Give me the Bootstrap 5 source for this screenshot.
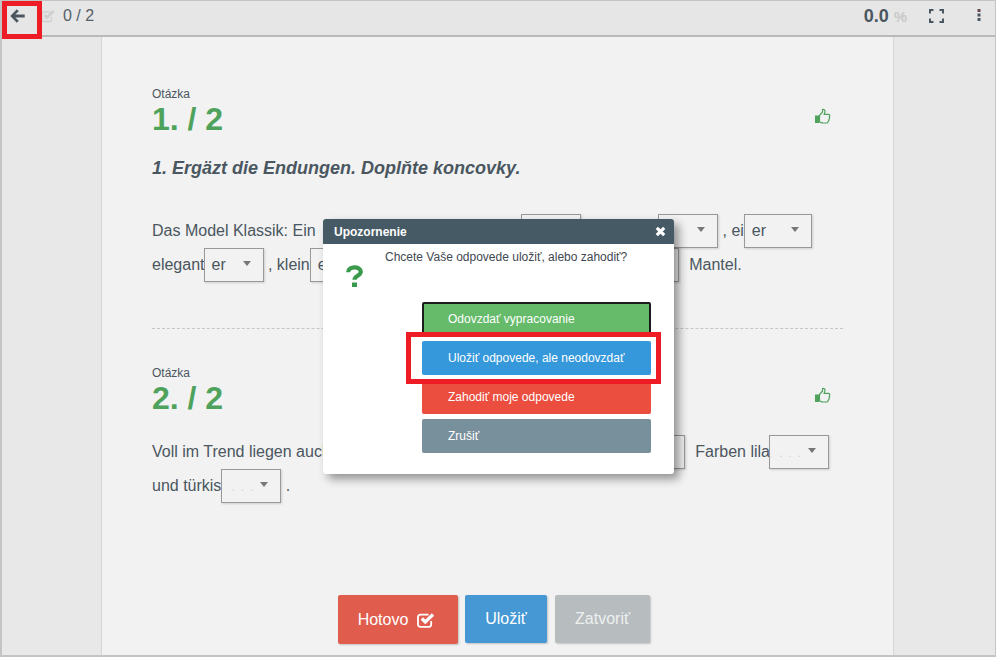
<!DOCTYPE html>
<html lang="sk">
<head>
<meta charset="utf-8">
<title>Otázky</title>
<link rel="stylesheet" href="https://cdn.jsdelivr.net/npm/bootstrap@5.3.0/dist/css/bootstrap.min.css">
<style>
html,body{height:100%;margin:0;overflow:hidden}
body{font-family:"Liberation Sans",Arial,sans-serif;background:#e8e8e8;color:#4a5660;font-size:16px}
.frame{height:657px;border:1px solid #c4c4c4;border-width:1px 1px 2px 2px;position:relative;overflow:hidden}
.topbar{height:36px;background:#e6e6e6;border-bottom:2px solid #b9b9b9;padding:0 0 5px 0}
.back-slot{width:39px;padding-left:8px}
.tick{margin-left:0}
.score-count{font-size:16px;margin-left:8px;color:#555f68}
.pct{font-size:18px;font-weight:700;color:#4a5660;padding-top:2px}
.pct span{color:#c8c8c8;font-size:15px}
.fs-slot{margin-left:22px}
.more-slot{margin-left:33px;margin-right:14px;margin-top:-2px}
.sheet{width:793px;height:620px;margin-left:99px;background:#f2f2f2;border:solid #d6d6d6;border-width:0 1px;padding:0 50px;}
.q-label{font-size:12px;line-height:14px;color:#4a5660}
.q-num{font-size:32px;font-weight:700;line-height:36px;color:#4ea25c}
.q-one{padding-top:50px}
.q-two{padding-top:37px;border-top:1px dashed #c6c6c6;margin-top:46px}
.thumb-slot{margin-top:21px;margin-right:12px}
.q-task{font-size:18px;font-weight:700;font-style:italic;margin-top:19px;line-height:24px}
.q-text{line-height:34px;margin-top:34px;white-space:nowrap}
.q-text-2{margin-top:19px}
.pick{display:inline-flex;align-items:center;justify-content:space-between;vertical-align:middle;width:60px;height:34px;border:1px solid #999;box-shadow:1px 1px 2px rgba(0,0,0,.15);padding:0 12px 0 7px;line-height:32px;color:#4a5660;margin-top:-2px}
.pick::after{content:"";border:4.5px solid transparent;border-top:5px solid #777;border-bottom:0;margin-top:-3px;margin-left:auto}
.pick-wide{width:68px}
.pick-nudge{margin-left:-1px}
.pick-empty{color:#d4d4d4;font-size:13px;letter-spacing:1px;padding-left:2px;padding-top:3px}
.after-pick{margin-left:6px}
.gap-a{display:inline-block;width:201px}
.gap-b{display:inline-block;width:77px}
.gap-c{display:inline-block;width:249px}
.gap-d{display:inline-block;width:294px}
.actions{position:absolute;left:336px;top:594px}
.act{height:48px;border:0;border-radius:2px;color:#fff;font-size:16px;box-shadow:1px 1px 2px rgba(0,0,0,.2);padding:0;display:flex;align-items:center;justify-content:center;gap:9px}
.act-done{width:120px;height:49px;background:#e05d4e;padding-right:3px}
.act-save{width:82px;margin-left:-1px;background:#4598d3}
.act-close{width:95px;background:#b7bcbf;color:#eef0f0}
.dialog{position:absolute;left:321px;top:218px;width:351px;height:255px;background:#fff;border-radius:3px;box-shadow:5px 5px 10px rgba(0,0,0,.4);overflow:hidden}
.dialog-head{height:25px;background:#465a65;color:#fff;font-size:12px;font-weight:700;padding:0 8px 0 11px}
.dialog-body{padding:0 23px 0 22px}
.ask{width:40px;margin-top:21px;margin-left:1px;margin-right:-1px}
.ask-text{font-size:12px;line-height:14px;margin-top:6px;color:#3f4750}
.stack{margin-left:77px;margin-top:15px;gap:5px}
.opt{height:34px;border:0;border-radius:2px;color:#fff;font-size:12px;text-align:left;padding:0 0 0 26px;width:229px;display:block;line-height:34px}
.opt-green{background:#65bb6a;border:2px solid #1c1c1c;padding-left:24px;line-height:30px}
.opt-blue{background:#3498db}
.opt-red{background:#eb4d3e}
.opt-grey{background:#78909c}
.mark-box{position:absolute;border:5px solid #ee1c25;pointer-events:none}
.mark-back{left:0;top:0;width:40px;height:38px}
.mark-opt{left:404px;top:331px;width:255px;height:52px}
</style>
</head>
<body>
<div class="frame">
  <header class="topbar d-flex align-items-center">
    <div class="back-slot d-flex">
      <svg width="15" height="14" viewBox="0 0 15 14"><path d="M6.800 0.300 8.800 2.300 5.300 5.400H14.700V8.600H5.300L8.800 11.700 6.800 13.700 0.300 7Z" fill="#4a5660"/></svg>
    </div>
    <svg class="tick" width="14" height="14" viewBox="0 0 14 14"><path d="M10.500 8v3a1.500 1.500 0 0 1-1.500 1.500H2.500A1.500 1.500 0 0 1 1 11V4.500A1.500 1.500 0 0 1 2.500 3H9" fill="none" stroke="#d0d0d0" stroke-width="1.400"/><path d="M3.500 6 6 8.500l6.500-6.500" fill="none" stroke="#cfcfcf" stroke-width="2.700"/></svg>
    <span class="score-count">0 / 2</span>
    <div class="ms-auto pct">0.0 <span>%</span></div>
    <div class="fs-slot d-flex">
      <svg width="15" height="14" viewBox="0 0 15 14"><path d="M1 4.500V1h3.500M10.500 1H14v3.500M14 9.500V13h-3.500M4.500 13H1V9.500" fill="none" stroke="#4a5660" stroke-width="2"/></svg>
    </div>
    <div class="more-slot d-flex">
      <svg width="4" height="14" viewBox="0 0 4 14"><rect x="0.500" y="1" width="3" height="3" fill="#6a4a50"/><rect x="0.500" y="5.500" width="3" height="3" fill="#4a5660"/><rect x="0.500" y="10" width="3" height="3" fill="#4a5660"/></svg>
    </div>
  </header>
  <main class="sheet">
    <section class="q-one">
      <div class="d-flex justify-content-between align-items-start">
        <div><div class="q-label">Otázka</div><div class="q-num">1. / 2</div></div>
        <svg class="thumb-slot" width="17" height="17" viewBox="0 0 17 17"><path d="M5.500 7.500 8.500 4V1.500c1.500-.5 2.500.5 2.500 2 0 1-.5 2-.8 2.800h4.300c1.500.2 1.500 2 .8 2.700.5 1 .3 1.800-.3 2.300.2 1-.2 1.700-.9 2.100.1 1.300-.8 1.600-2 1.600H9c-1.500 0-2.500-.8-3.500-1z" fill="none" stroke="#4ea25c" stroke-width="1.200"/><rect x="1" y="7.500" width="4" height="7.500" fill="#4ea25c"/></svg>
      </div>
      <div class="q-task">1. Ergäzt die Endungen. Doplňte koncovky.</div>
      <div class="q-text">
        <div>Das Model Klassik: Ein <span class="gap-a"></span><span class="pick"></span><span class="gap-b"></span><span class="pick"></span> , ei<span class="pick pick-wide">er</span></div>
        <div>elegant<span class="pick pick-nudge">er</span> , klein<span class="pick">er</span><span class="gap-c"></span><span class="pick"></span> <span class="after-pick">Mantel.</span></div>
      </div>
    </section>
    <section class="q-two">
      <div class="d-flex justify-content-between align-items-start">
        <div><div class="q-label">Otázka</div><div class="q-num">2. / 2</div></div>
        <svg class="thumb-slot" width="17" height="17" viewBox="0 0 17 17"><path d="M5.500 7.500 8.500 4V1.500c1.500-.5 2.500.5 2.500 2 0 1-.5 2-.8 2.800h4.300c1.500.2 1.500 2 .8 2.700.5 1 .3 1.800-.3 2.300.2 1-.2 1.700-.9 2.100.1 1.300-.8 1.600-2 1.600H9c-1.500 0-2.500-.8-3.500-1z" fill="none" stroke="#4ea25c" stroke-width="1.200"/><rect x="1" y="7.500" width="4" height="7.500" fill="#4ea25c"/></svg>
      </div>
      <div class="q-text q-text-2">
        <div>Voll im Trend liegen auch<span class="gap-d"></span><span class="pick"></span> <span class="after-pick">Farben lila</span><span class="pick pick-nudge"><span class="pick-empty">. . .</span></span></div>
        <div>und türkis<span class="pick"><span class="pick-empty">. . .</span></span> .</div>
      </div>
    </section>
  </main>
  <div class="actions d-flex gap-2 align-items-start">
    <button class="act act-done" type="button">Hotovo
      <svg width="18" height="16" viewBox="0 0 18 16"><path d="M14.200 9v3.500A2.300 2.300 0 0 1 12 14.800H3.300A2.300 2.300 0 0 1 1 12.500V5a2.300 2.300 0 0 1 2.300-2.300H11.500" fill="none" stroke="#fff" stroke-width="1.800"/><path d="M4.800 6.500l3.500 3.500L16 2.500" fill="none" stroke="#fff" stroke-width="3.200"/></svg>
    </button>
    <button class="act act-save" type="button">Uložiť</button>
    <button class="act act-close" type="button">Zatvoriť</button>
  </div>
  <div class="dialog" role="dialog">
    <div class="dialog-head d-flex align-items-center justify-content-between">
      <span>Upozornenie</span>
      <svg width="11" height="11" viewBox="0 0 11 11"><path d="M1.800 1.800l7.400 7.400M9.200 1.800l-7.400 7.400" stroke="#fff" stroke-width="3.200"/></svg>
    </div>
    <div class="dialog-body">
      <div class="d-flex">
        <div class="ask">
          <svg width="17" height="22" viewBox="0 0 17 22" class="d-block"><path d="M2.200 7.200C2.200 .8 14.800 .8 14.800 6.800 14.800 11 8.500 10.500 8.500 14.800" fill="none" stroke="#3b9b4c" stroke-width="4.200"/><rect x="6" y="17.500" width="5" height="4.500" fill="#3b9b4c"/></svg>
        </div>
        <div class="ask-text">Chcete Vaše odpovede uložiť, alebo zahodiť?</div>
      </div>
      <div class="stack d-flex flex-column">
        <button class="opt opt-green" type="button">Odovzdať vypracovanie</button>
        <button class="opt opt-blue" type="button">Uložiť odpovede, ale neodovzdať</button>
        <button class="opt opt-red" type="button">Zahodiť moje odpovede</button>
        <button class="opt opt-grey" type="button">Zrušiť</button>
      </div>
    </div>
  </div>
  <div class="mark-box mark-back"></div>
  <div class="mark-box mark-opt"></div>
</div>
<script src="https://cdn.jsdelivr.net/npm/bootstrap@5.3.0/dist/js/bootstrap.bundle.min.js"></script>
</body>
</html>
